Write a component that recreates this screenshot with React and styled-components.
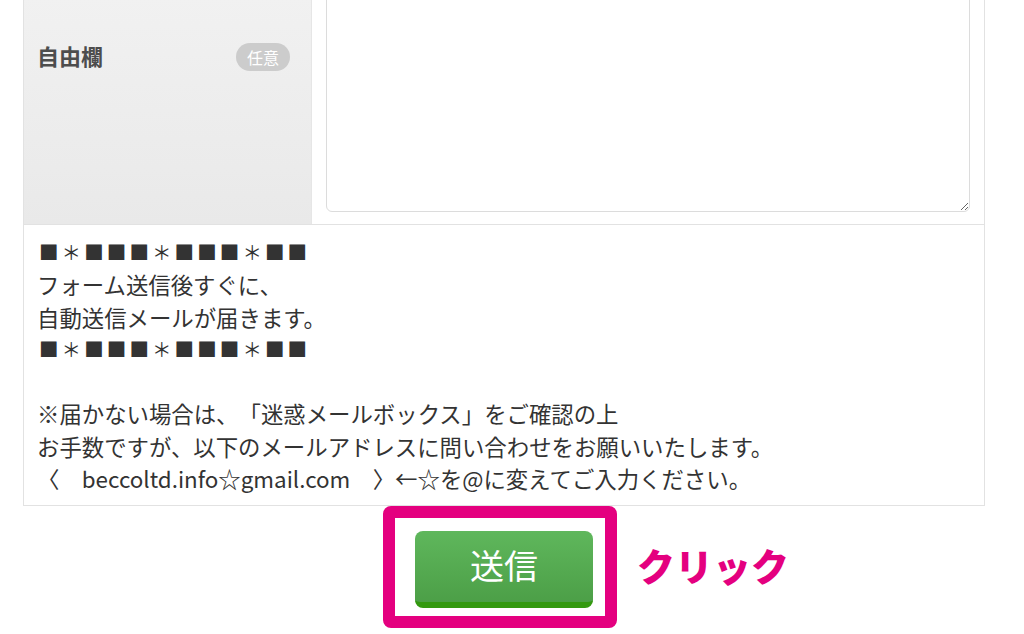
import React from 'react';
import styled, { createGlobalStyle } from 'styled-components';

const GlobalStyle = createGlobalStyle`
	html, body {
		margin: 0;
		padding: 0;
		background: #fff;
		overflow: hidden;
	}
	body {
		font-family: "Noto Sans CJK JP", "Noto Sans", sans-serif;
		color: #333;
	}
`;

const Page = styled.div`
	width: 962px;
	margin: -60px 0 0 23px;
`;

const FormRow = styled.div`
	display: flex;
	border-left: 1px solid #e2e2e2;
	border-right: 1px solid #e2e2e2;
	border-bottom: 1px solid #e2e2e2;
`;

const LabelCell = styled.div`
	width: 288px;
	flex-shrink: 0;
	box-sizing: border-box;
	padding: 100px 21px 0 13px;
	display: flex;
	align-items: flex-start;
	justify-content: space-between;
	background: linear-gradient(to bottom, #f3f3f3, #e9e9e9);
	border-right: 1px solid #e6e6e6;
	box-shadow: 1px 0 0 #f6f6f6;
`;

const Label = styled.span`
	font-size: 22px;
	font-weight: 700;
	line-height: 30px;
	color: #4d4d4d;
`;

const Badge = styled.span`
	display: inline-flex;
	align-items: center;
	justify-content: center;
	width: 54px;
	height: 28px;
	border-radius: 14px;
	background: #cccccc;
	color: #fff;
	font-size: 16px;
	line-height: 1;
	margin-top: 3px;
`;

const InputCell = styled.div`
	flex: 1;
	padding: 14px 14px 12px 14px;
	background: #fff;
`;

const TextArea = styled.textarea`
	display: block;
	width: 100%;
	height: 258px;
	box-sizing: border-box;
	border: 1px solid #dcdcdc;
	border-radius: 6px;
	background: #fff;
	font-family: inherit;
	font-size: 18px;
`;

const Notice = styled.div`
	border-left: 1px solid #e2e2e2;
	border-right: 1px solid #e2e2e2;
	border-bottom: 1px solid #e2e2e2;
	padding: 11px 13px 11px;
	font-size: 22.4px;
	line-height: 32.3px;
	color: #333;
	text-spacing-trim: space-all;
`;

const Line = styled.div`
	white-space: pre;
	min-height: 32.3px;
`;

const DecoLine = styled.div`
	height: 32.3px;
	display: flex;
	align-items: center;
	padding-left: 2px;
	font-size: 19.5px;
	letter-spacing: 3.1px;
	color: #333;
`;

const SubmitArea = styled.div`
	display: flex;
	align-items: center;
	gap: 20px;
	padding-left: 360px;
`;

const Highlight = styled.div`
	border: 12px solid #e4007f;
	border-radius: 8px;
	padding: 13px 12px 8px 20px;
	background: #fff;
`;

const SendButton = styled.button`
	display: flex;
	align-items: center;
	justify-content: center;
	width: 178px;
	height: 77px;
	box-sizing: border-box;
	padding: 0 0 4px;
	border: none;
	border-bottom: 6px solid #33990f;
	border-radius: 8px;
	background: linear-gradient(to bottom, #5fb75c, #4c9f47);
	color: #fff;
	font-family: "Noto Sans CJK JP", sans-serif;
	font-size: 34px;
	font-weight: 400;
	cursor: pointer;
`;

const ClickText = styled.span`
	color: #e4007f;
	font-size: 38px;
	font-weight: 900;
	margin-top: -6px;
`;

const deco = '■＊■■■＊■■■＊■■';

const noticeLines = [
	{ deco: true },
	{ text: 'フォーム送信後すぐに、' },
	{ text: '自動送信メールが届きます。' },
	{ deco: true },
	{ text: '' },
	{ text: '※届かない場合は、「迷惑メールボックス」をご確認の上' },
	{ text: 'お手数ですが、以下のメールアドレスに問い合わせをお願いいたします。' },
	{ text: '〈　beccoltd.info☆gmail.com　〉←☆を@に変えてご入力ください。' }
];

export default function App() {
	return (
		<>
			<GlobalStyle />
			<Page>
				<FormRow>
					<LabelCell>
						<Label>自由欄</Label>
						<Badge>任意</Badge>
					</LabelCell>
					<InputCell>
						<TextArea />
					</InputCell>
				</FormRow>
				<Notice>
					{noticeLines.map((line, i) =>
						line.deco
							? <DecoLine key={i}>{deco}</DecoLine>
							: <Line key={i}>{line.text}</Line>
					)}
				</Notice>
				<SubmitArea>
					<Highlight>
						<SendButton>送信</SendButton>
					</Highlight>
					<ClickText>クリック</ClickText>
				</SubmitArea>
			</Page>
		</>
	);
}
